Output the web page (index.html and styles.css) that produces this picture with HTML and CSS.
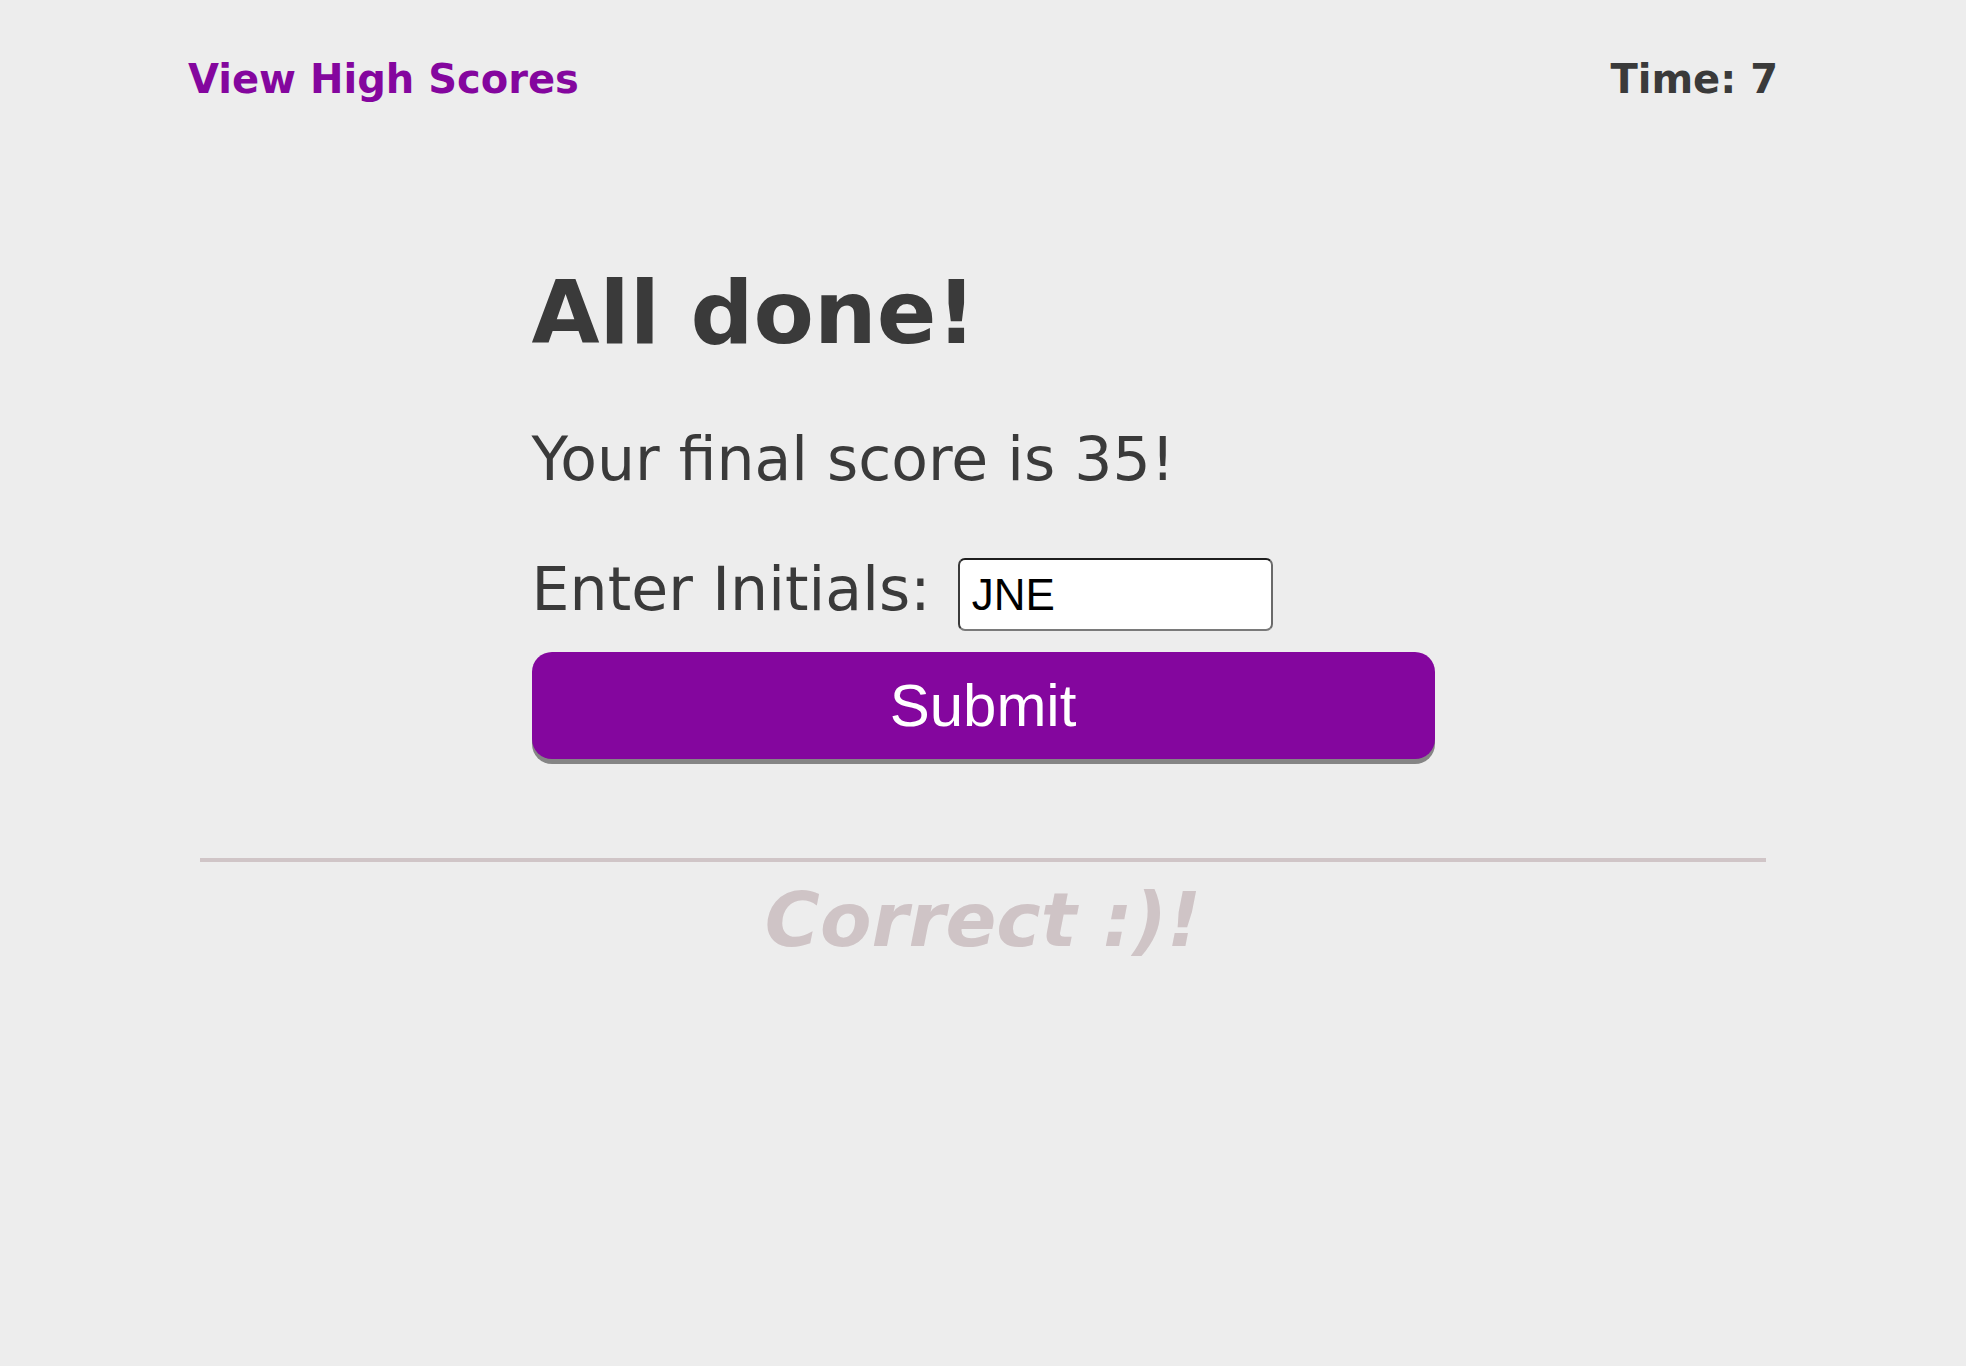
FILE: index.html
```html
<!DOCTYPE html>
<html lang="en">
<head>
<meta charset="utf-8">
<title>Quiz - All done</title>
<link rel="stylesheet" href="styles.css">
</head>
<body>
<header class="top-bar">
  <a class="high-scores" href="#">View High Scores</a>
  <div class="timer">Time: 7</div>
</header>
<main class="content">
  <section class="done">
    <h1 class="done-title">All done!</h1>
    <p class="done-score">Your final score is 35!</p>
    <form class="initials-form">
      <div class="initials-row">
        <label class="initials-label" for="initials">Enter Initials:</label>
        <input class="initials-input" id="initials" type="text" value="JNE">
      </div>
      <button class="submit-btn" type="button">Submit</button>
    </form>
  </section>
  <section class="feedback">
    <hr class="divider">
    <p class="feedback-text">Correct :)!</p>
  </section>
</main>
</body>
</html>
```

FILE: styles.css
```css
* {
  box-sizing: border-box;
}

html, body {
  margin: 0;
  padding: 0;
}

body {
  background: #ededed;
  color: #3a3a3a;
  font-family: "DejaVu Sans", Verdana, sans-serif;
  min-height: 1366px;
}

.top-bar {
  display: flex;
  justify-content: space-between;
  align-items: baseline;
  padding: 55px 188px 0 188px;
  font-size: 40px;
  line-height: 48px;
  font-weight: bold;
}

.high-scores {
  color: #84069e;
  text-decoration: none;
}

.timer {
  color: #3a3a3a;
}

.content {
  display: flex;
  flex-direction: column;
  align-items: center;
}

.done {
  width: 903px;
  margin-top: 166px;
}

.done-title {
  margin: 0;
  font-size: 88px;
  line-height: 88px;
  font-weight: bold;
}

.done-score {
  margin: 72px 0 0 0;
  font-size: 60px;
  line-height: 60px;
}

.initials-form {
  display: flex;
  flex-direction: column;
  margin-top: 69px;
}

.initials-row {
  display: flex;
  align-items: baseline;
  gap: 27px;
}

.initials-label {
  font-size: 60px;
  line-height: 60px;
  letter-spacing: 0.1px;
}

.initials-input {
  width: 315px;
  height: 73px;
  padding: 0 0 0 12px;
  font-family: "Liberation Sans", Arial, sans-serif;
  font-size: 44px;
  color: #000;
  background: #fff;
  border: 2px solid;
  border-color: #1e1e1e #6a6a6a #7a7a7a #3a3a3a;
  border-radius: 7px;
  outline: none;
}

.submit-btn {
  margin-top: 21px;
  width: 100%;
  height: 107px;
  background: #84069e;
  color: #fff;
  border: none;
  border-radius: 20px;
  box-shadow: 0 5px 0 #858585;
  font-family: "Liberation Sans", Arial, sans-serif;
  font-size: 60px;
  line-height: 1;
  padding: 0;
  cursor: pointer;
}

.feedback {
  width: 1566px;
  margin-top: 99px;
  display: flex;
  flex-direction: column;
  align-items: center;
}

.divider {
  width: 100%;
  height: 4px;
  margin: 0;
  border: none;
  background: #d0c5c7;
}

.feedback-text {
  margin: 21px 0 0 0;
  font-size: 75px;
  line-height: 75px;
  font-weight: bold;
  font-style: italic;
  color: #cfc4c6;
}
```
